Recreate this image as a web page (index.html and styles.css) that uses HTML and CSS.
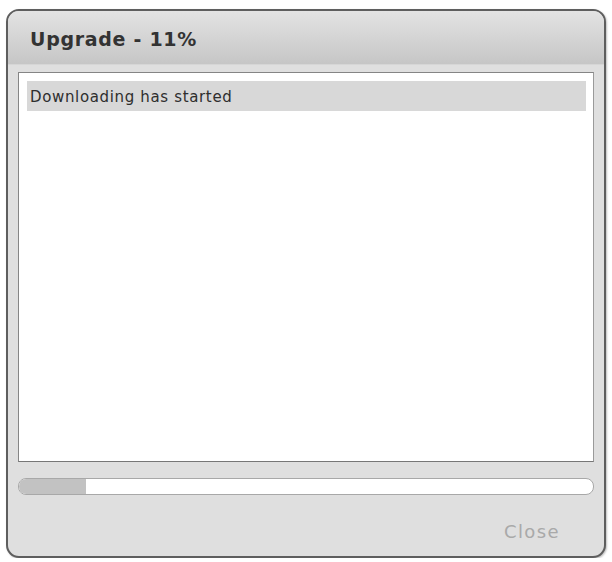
FILE: index.html
```html
<!DOCTYPE html>
<html>
<head>
<meta charset="utf-8">
<link rel="stylesheet" href="styles.css">
</head>
<body>
<div class="dialog">
  <div class="header"><span class="title">Upgrade - 11%</span></div>
  <div class="body">
    <div class="log">
      <div class="row">Downloading has started</div>
    </div>
    <div class="progress"><div class="fill" style="width:67px"></div></div>
    <div class="footer"><span class="close">Close</span></div>
  </div>
</div>
</body>
</html>
```
FILE: styles.css
```css
html, body {
  margin: 0;
  padding: 0;
  background: #ffffff;
}
body {
  font-family: "DejaVu Sans", Verdana, sans-serif;
}
.dialog {
  box-sizing: border-box;
  margin: 9px 0 0 6px;
  width: 600px;
  height: 549px;
  border: 2px solid #5e5e5e;
  border-radius: 13px;
  background: #dfdfdf;
  overflow: hidden;
  display: flex;
  flex-direction: column;
  box-shadow: 1px 1px 2px rgba(0,0,0,0.25);
}
.header {
  height: 53px;
  flex: none;
  background: linear-gradient(#e3e3e3, #c6c6c6);
  display: flex;
  align-items: center;
  padding-left: 22px;
  border-bottom: 1px solid #d6d6d6;
}
.title {
  font-weight: bold;
  font-size: 19px;
  letter-spacing: 0.7px;
  color: #333333;
  padding-top: 2px;
}
.body {
  padding: 7px 10px 0 10px;
  display: flex;
  flex-direction: column;
  flex: 1;
}
.log {
  box-sizing: border-box;
  height: 390px;
  background: #ffffff;
  border: 1px solid #858585;
  border-right-color: #9a9a9a;
  border-bottom-color: #777777;
  padding: 8px 7px 0 8px;
}
.row {
  height: 30px;
  background: #d8d8d8;
  display: flex;
  align-items: center;
  padding-left: 3px;
  padding-top: 1px;
  box-sizing: border-box;
  font-size: 15px;
  letter-spacing: 0.65px;
  color: #2e2e2e;
}
.progress {
  box-sizing: border-box;
  margin-top: 16px;
  height: 17px;
  border: 1px solid #a8a8a8;
  border-radius: 8px;
  background: #ffffff;
  overflow: hidden;
  display: flex;
}
.fill {
  height: 100%;
  background: #c2c2c2;
}
.footer {
  display: flex;
  justify-content: flex-end;
  padding-right: 34px;
  margin-top: 26px;
}
.close {
  font-size: 18px;
  letter-spacing: 1.4px;
  color: #a9a9a9;
}
```
